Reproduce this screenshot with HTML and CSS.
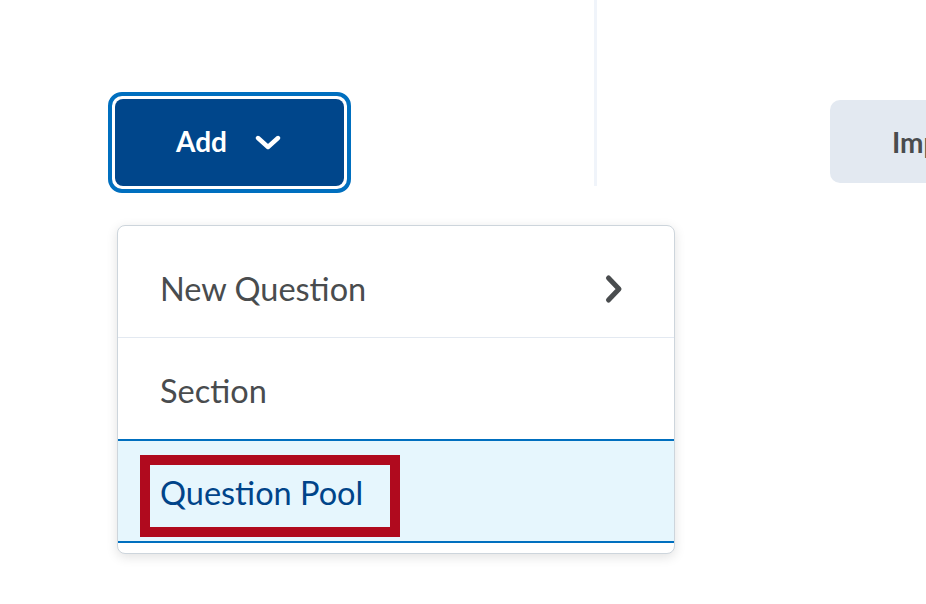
FILE: index.html
```html
<!DOCTYPE html>
<html>
<head>
<meta charset="utf-8">
<link rel="stylesheet" href="styles.css">
</head>
<body>
<div class="page">
  <div class="left">
    <div class="focus-ring">
      <button class="add-btn">
        <span>Add</span>
        <svg class="chev-down" width="26" height="16" viewBox="0 0 26 16"><path d="M3 3 L13 12 L23 3" fill="none" stroke="#fff" stroke-width="4.4" stroke-linecap="round" stroke-linejoin="round"/></svg>
      </button>
    </div>
  </div>
  <div class="divider"></div>
  <div class="right">
    <button class="import-btn">Import</button>
  </div>
</div>
<div class="menu">
  <div class="item">
    <span>New Question</span>
    <svg class="chev-right" width="20" height="30" viewBox="0 0 20 30"><path d="M4.5 4 L15 15 L4.5 26" fill="none" stroke="#494c4e" stroke-width="5" stroke-linecap="round" stroke-linejoin="round"/></svg>
  </div>
  <div class="item">
    <span>Section</span>
  </div>
  <div class="item active">
    <span>Question Pool</span>
    <div class="highlight"></div>
  </div>
</div>
</body>
</html>
```

FILE: styles.css
```css
html, body {
  margin: 0;
  padding: 0;
  background: #fff;
  overflow: hidden;
  width: 926px;
  height: 604px;
  font-family: Lato, "Open Sans", sans-serif;
}
.page {
  display: flex;
  align-items: flex-start;
}
.left {
  flex-shrink: 0;
  width: 486px;
  padding-left: 108px;
  padding-top: 92px;
}
.focus-ring {
  display: inline-flex;
  border: 4px solid #006fbf;
  border-radius: 14px;
  padding: 3px;
}
.add-btn {
  width: 229px;
  height: 87px;
  background: #00468b;
  border: none;
  border-radius: 8px;
  color: #fff;
  font-family: Lato, sans-serif;
  font-weight: 700;
  font-size: 28px;
  display: flex;
  align-items: center;
  justify-content: center;
  gap: 28px;
  padding: 0 2px 4px 0;
}
.chev-down { margin-top: 4px; }
.divider {
  flex-shrink: 0;
  width: 3px;
  height: 186px;
  background: #f0f4fa;
}
.right {
  flex-shrink: 0;
  padding-left: 233px;
  padding-top: 100px;
}
.import-btn {
  width: 200px;
  height: 83px;
  background: #e3e9f1;
  border: none;
  border-radius: 10px;
  font-family: Lato, sans-serif;
  font-weight: 700;
  font-size: 28px;
  color: #494c4e;
  text-align: left;
  padding: 0 0 0 62px;
}
.menu {
  position: absolute;
  left: 117px;
  top: 225px;
  width: 556px;
  background: #fff;
  border: 1px solid #cdd5dc;
  border-radius: 8px;
  box-shadow: 0 3px 12px rgba(0,0,0,0.12);
  padding: 10px 0;
}
.item {
  position: relative;
  height: 101px;
  box-sizing: border-box;
  display: flex;
  align-items: center;
  justify-content: space-between;
  padding: 4px 50px 0 42px;
  font-size: 32.5px;
  color: #494c4e;
  border-bottom: 1px solid #e3e9f1;
}
.item:first-child { height: 102px; }
.item:nth-child(2) { border-bottom: none; }
.item.active {
  background: #e6f6fd;
  border-top: 2px solid #006fbf;
  border-bottom: 2px solid #006fbf;
  color: #004489;
  height: 104px;
  padding-top: 2px;
}
.highlight {
  position: absolute;
  left: 22px;
  top: 14px;
  width: 240px;
  height: 62px;
  border: 10px solid #b00a1e;
}
```
